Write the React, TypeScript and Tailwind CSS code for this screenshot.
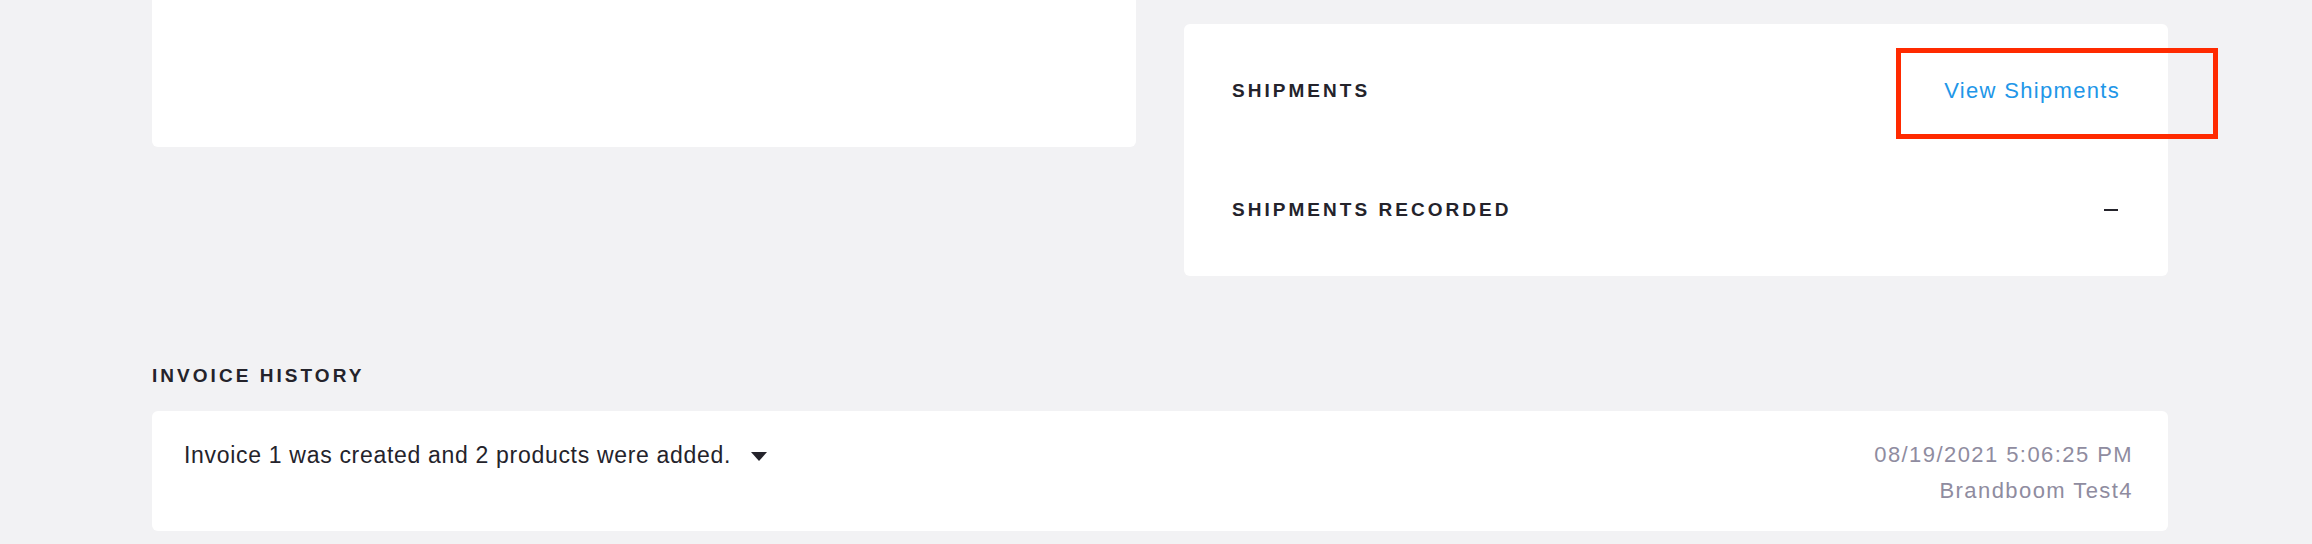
import { ReactNode } from 'react';

const font = { fontFamily: '"Liberation Sans", Arial, sans-serif' };

function Heading({ children }: { children: ReactNode }) {
  return (
    <h3 className="text-[19px] font-bold uppercase tracking-[0.16em] leading-6 text-[#24232b]">
      {children}
    </h3>
  );
}

export default function App() {
  return (
    <div className="min-h-screen bg-[#f2f2f4] pl-[152px] pr-[144px]" style={font}>
      <div className="grid grid-cols-2 gap-12 items-start">
        <div className="h-[147px] rounded-b-md bg-white"></div>

        <div className="relative mt-6 rounded-md bg-white px-12 pt-10 pb-[44px]">
          <div className="flex h-12 items-center justify-between pt-[5px]">
            <Heading>Shipments</Heading>
            <a className="text-[22px] tracking-[0.06em] text-[#2196e8] cursor-pointer">View Shipments</a>
          </div>
          <div className="mt-[72px] flex h-12 items-center justify-between pt-[4px]">
            <Heading>Shipments Recorded</Heading>
            <span className="mr-[2px] block h-[2px] w-[14px] bg-[#24232b]"></span>
          </div>

          {/* annotation box */}
          <div className="absolute left-[712px] top-6 h-[91px] w-[322px] border-[5px] border-[#ff2a00]"></div>
        </div>
      </div>

      <div className="mt-[88px]">
        <Heading>Invoice History</Heading>
      </div>

      <div className="mt-[23px] flex h-[120px] justify-between rounded-md bg-white pl-8 pr-[35px] pt-[26px]">
        <div className="flex items-center h-9 text-[23px] tracking-[0.03em] text-[#24232b]">
          <span>Invoice 1 was created and 2 products were added.</span>
          <svg className="ml-[20px] mt-[2px]" width="16" height="9" viewBox="0 0 16 9">
            <path d="M0 0 H16 L8 9 Z" fill="#24232b" />
          </svg>
        </div>
        <div className="text-right text-[22px] leading-9 tracking-[0.065em] text-[#8f8ca0]">
          <div>08/19/2021 5:06:25 PM</div>
          <div>Brandboom Test4</div>
        </div>
      </div>
    </div>
  );
}
